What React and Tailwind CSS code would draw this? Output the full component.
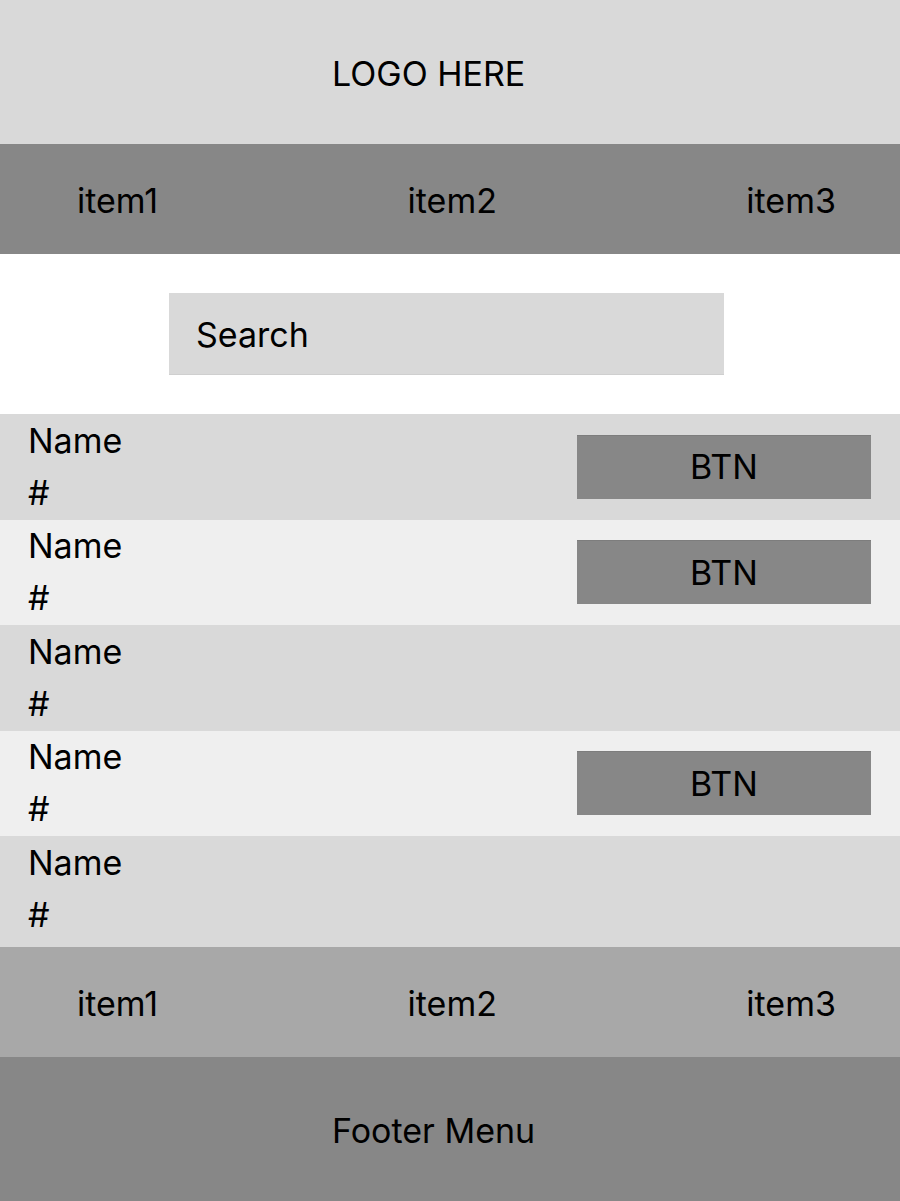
const navItems = ["item1", "item2", "item3"];

const rows = [
    { name: "Name", num: "#", btn: true, bg: "bg-[#d9d9d9]" },
    { name: "Name", num: "#", btn: true, bg: "bg-[#efefef]" },
    { name: "Name", num: "#", btn: false, bg: "bg-[#d9d9d9]" },
    { name: "Name", num: "#", btn: true, bg: "bg-[#efefef]" },
    { name: "Name", num: "#", btn: false, bg: "bg-[#d9d9d9]", tall: true },
];

const NavBar = ({ bg }) => (
    <nav className={`h-[110px] flex items-center justify-between pl-[77px] pr-[64px] pt-[3px] ${bg}`}>
        {navItems.map((item) => (
            <span key={item} className="text-[34px] leading-none">
                {item}
            </span>
        ))}
    </nav>
);

const ListRow = ({ row }) => (
    <div className={`flex items-center justify-between pl-[28px] pr-[29px] ${row.bg} ${row.tall ? "h-[111px] pb-[6px]" : "h-[105.5px]"}`}>
        <div className="flex flex-col text-[34px] leading-[52px]">
            <span>{row.name}</span>
            <span>{row.num}</span>
        </div>
        {row.btn && (
            <button className="w-[294px] h-[64px] bg-[#878787] border-t border-[#7d7d7d] text-[34px] leading-none">
                BTN
            </button>
        )}
    </div>
);

export default function App() {
    return (
        <div className="w-[900px] h-[1201px] flex flex-col text-black bg-white font-['Inter','Liberation_Sans',sans-serif]">
            {/* Header */}
            <header className="h-[144px] bg-[#d9d9d9] flex items-center pl-[332px] pt-[3px]">
                <span className="text-[34px] leading-none">LOGO HERE</span>
            </header>

            <NavBar bg="bg-[#878787]" />

            {/* Search */}
            <div className="h-[160px] flex items-center pl-[169px]">
                <div className="w-[555px] h-[82px] bg-[#d9d9d9] border-b border-[#cfcfcf] flex items-center pl-[27px] pt-[2px]">
                    <span className="text-[34px] leading-none">Search</span>
                </div>
            </div>

            {/* List */}
            <div className="flex flex-col">
                {rows.map((row, i) => (
                    <ListRow key={i} row={row} />
                ))}
            </div>

            <NavBar bg="bg-[#a8a8a8]" />

            {/* Footer */}
            <footer className="flex-1 bg-[#878787] flex items-center pl-[332px] pt-[3px]">
                <span className="text-[34px] leading-none">Footer Menu</span>
            </footer>
        </div>
    );
}
